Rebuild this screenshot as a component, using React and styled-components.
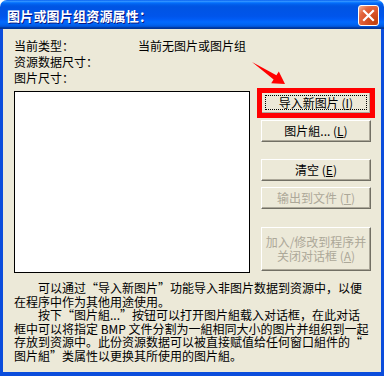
import React from "react";
import styled, { createGlobalStyle } from "styled-components";

const face = "#ece9d8";
const frame = "#0b4ddc";

const Global = createGlobalStyle`
  html, body { margin: 0; padding: 0; background: #fff; }
  body { font-family: "Noto Sans CJK SC", "Liberation Sans", sans-serif; }
`;

const Window = styled.div`
  width: 384px;
  height: 376px;
  display: flex;
  flex-direction: column;
  border-radius: 7px 7px 0 0;
  overflow: hidden;
  box-sizing: border-box;
`;

const TitleBar = styled.div`
  height: 29px;
  box-sizing: border-box;
  padding: 5px 5px 3px 7px;
  display: flex;
  align-items: center;
  justify-content: space-between;
  background: linear-gradient(180deg, #0058ee 0%, #3593ff 4%, #288eff 6%, #127dff 8%, #036ffc 10%,
    #0262ee 14%, #0057e5 20%, #0054e3 24%, #0055eb 56%, #005bf5 66%, #026afe 76%, #0062ef 86%,
    #0052d6 92%, #0040ab 94%, #003092 100%);
`;

const Title = styled.span`
  color: #fff;
  font-size: 13px;
  font-weight: 700;
  letter-spacing: 0.2px;
  text-shadow: 1px 1px #0a1883;
  line-height: 21px;
`;

const CloseBtn = styled.div`
  width: 21px;
  height: 21px;
  box-sizing: border-box;
  border: 1px solid #fff;
  border-radius: 3px;
  background: radial-gradient(circle at 85% 85%, #c0400c 0%, #d9542a 45%, #e4673e 70%, #f3a98a 95%);
  display: grid;
  place-items: center;
`;

const Body = styled.div`
  flex: 1;
  background: ${face};
  border: solid ${frame};
  border-width: 0 3px 4px 3px;
  padding: 9px 0 0 11px;
  color: #000;
  font-size: 12px;
`;

const InfoGrid = styled.div`
  display: grid;
  grid-template-columns: 124px 1fr;
  line-height: 16px;
`;

const Middle = styled.div`
  position: relative;
  margin-top: 5px;
  display: flex;
  gap: 11px;
  align-items: flex-start;
`;

const Preview = styled.div`
  width: 236px;
  height: 182px;
  box-sizing: border-box;
  background: #fff;
  border: 1px solid #000;
`;

const ButtonCol = styled.div`
  display: flex;
  flex-direction: column;
  width: 110px;
  padding-top: 1px;
`;

const Btn = styled.div`
  height: ${({ $h }) => $h || 22}px;
  margin-top: ${({ $mt }) => $mt || 0}px;
  box-sizing: border-box;
  background: ${face};
  border: 1px solid;
  border-color: #fff #716f64 #716f64 #fff;
  box-shadow: inset -1px -1px #aca899;
  color: ${({ disabled }) => (disabled ? "#aca899" : "#000")};
  display: flex;
  align-items: center;
  justify-content: center;
  text-align: center;
  font-size: 12px;
  position: relative;
  ${({ $hl }) => $hl && `outline: 5px solid #ff0000; outline-offset: -1px;`}
`;

const Label = styled.span`
  line-height: ${({ $lh }) => $lh || 16}px;
  white-space: nowrap;
`;

const Focus = styled.span`
  position: absolute;
  inset: 2px 3px 3px 3px;
  border: 1px dotted #000;
`;

const Arrow = styled.svg`
  position: absolute;
  left: 238px;
  top: -30px;
`;

const Desc = styled.div`
  margin-top: 8px;
  font-size: 12px;
  line-height: 13.6px;
  white-space: nowrap;
`;

const Para = styled.p`
  margin: 0;
  text-indent: 24px;
`;

const U = styled.u`
  text-underline-offset: 1px;
`;

export default function App() {
  return (
    <>
      <Global />
      <Window lang="zh-CN">
        <TitleBar>
          <Title>图片或图片组资源属性：</Title>
          <CloseBtn>
            <svg width="13" height="13" viewBox="0 0 13 13">
              <path d="M2 2 L11 11 M11 2 L2 11" stroke="#fff" strokeWidth="2.2" strokeLinecap="square" />
            </svg>
          </CloseBtn>
        </TitleBar>
        <Body>
          <InfoGrid>
            <span>当前类型：</span>
            <span>当前无图片或图片组</span>
            <span>资源数据尺寸：</span>
            <span />
            <span>图片尺寸：</span>
            <span />
          </InfoGrid>
          <Middle>
            <Preview />
            <ButtonCol>
              <Btn $hl>
                <Focus />
                <Label>导入新图片 (<U>I</U>)</Label>
              </Btn>
              <Btn $mt={6}>
                <Label>图片組... (<U>L</U>)</Label>
              </Btn>
              <Btn $mt={17}>
                <Label>清空 (<U>E</U>)</Label>
              </Btn>
              <Btn $mt={6} disabled>
                <Label>输出到文件 (<U>T</U>)</Label>
              </Btn>
              <Btn $mt={18} $h={44} disabled>
                <Label $lh={14}>
                  加入/修改到程序并<br />关闭对话框 (<U>A</U>)
                </Label>
              </Btn>
            </ButtonCol>
            <Arrow width="36" height="24" viewBox="252 61 36 24">
              <polygon
                points="252,62 276.4,75.3 278.8,71.5 285,84 271.2,83.3 273.6,79.5"
                fill="#ff0000"
              />
            </Arrow>
          </Middle>
          <Desc>
            <Para>
              可以通过“导入新图片”功能导入非图片数据到资源中，以便<br />
              在程序中作为其他用途使用。
            </Para>
            <Para>
              按下“图片組...”按钮可以打开图片組载入对话框，在此对话<br />
              框中可以将指定 BMP 文件分割为一組相同大小的图片并组织到一起<br />
              存放到资源中。此份资源数据可以被直接赋值给任何窗口組件的“<br />
              图片組”类属性以更换其所使用的图片組。
            </Para>
          </Desc>
        </Body>
      </Window>
    </>
  );
}
